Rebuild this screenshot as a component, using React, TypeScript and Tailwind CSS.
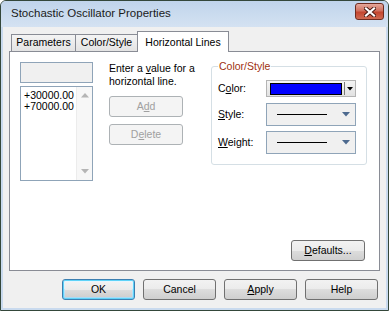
import React from "react";

const FONT = { fontFamily: '"Liberation Sans", Arial, sans-serif' };

const BTN =
  "flex items-center justify-center rounded-[3px] border border-[#707070] bg-[linear-gradient(#f2f2f2_0%,#ebebeb_50%,#dddddd_50%,#cfcfcf_100%)] text-[10.5px] text-black";

const DISABLED =
  "flex items-center justify-center rounded-[3px] border border-[#adb2b5] bg-[#f4f4f4] text-[10.5px] text-[#a0a0a0]";

function U({ children }: { children: React.ReactNode }) {
  return <span className="underline underline-offset-[1px]">{children}</span>;
}

function BlueArrow() {
  return (
    <svg width="8" height="5" viewBox="0 0 8 5">
      <polygon points="0,0 8,0 4,4.5" fill="#4d6a8f" />
    </svg>
  );
}

function LineCombo() {
  return (
    <div className="flex h-[23px] w-[90px] items-center border border-[#8fa4b8] bg-[#f0f0f0]">
      <div className="ml-[10px] h-px w-[50px] bg-black" />
      <div className="ml-auto mr-[5px] flex">
        <BlueArrow />
      </div>
    </div>
  );
}

function ScrollArrow({ up }: { up?: boolean }) {
  return (
    <svg width="8" height="5" viewBox="0 0 8 5">
      <polygon points={up ? "0,4.5 8,4.5 4,0" : "0,0 8,0 4,4.5"} fill="#b5b5b5" />
    </svg>
  );
}

export default function App() {
  return (
    <div style={FONT} className="h-[311px] w-[389px] overflow-hidden">
      <div className="flex h-full flex-col rounded-t-[6px] border border-[#34473a] bg-[#c9daee]">
        {/* title bar */}
        <div className="flex h-[26px] shrink-0 items-center bg-[linear-gradient(#c0d4eb,#d4e2f2)] pl-[10px] pr-[4px] rounded-t-[5px]">
          <span className="text-[11.5px] text-[#1a1a1a]">Stochastic Oscillator Properties</span>
          <div className="ml-auto mb-[5px] flex h-[17px] w-[29px] items-center justify-center rounded-[3px] border border-[#6e2b1f] bg-[linear-gradient(#e6a99c_0%,#d0705e_45%,#c4462f_55%,#cf6a52_100%)]">
            <svg width="12" height="10" viewBox="0 0 12 10">
              <path d="M2 1.5 L10 8.5 M10 1.5 L2 8.5" stroke="#4a1a12" strokeWidth="4" strokeLinecap="square" />
              <path d="M2 1.5 L10 8.5 M10 1.5 L2 8.5" stroke="#ffffff" strokeWidth="2.2" strokeLinecap="square" />
            </svg>
          </div>
        </div>

        {/* client area */}
        <div className="mx-[2px] mb-[2px] flex flex-1 flex-col bg-[#f0f0f0] px-[6px] pt-[4px]">
          {/* tabs */}
          <div className="relative z-10 flex h-[20px] items-end pl-[2px]">
            <div className="flex h-[17px] w-[65px] items-center justify-center border border-b-0 border-[#898c95] bg-[linear-gradient(#f4f4f4,#e3e3e3)] text-[10.5px]">
              Parameters
            </div>
            <div className="flex h-[17px] w-[62px] items-center justify-center border border-l-0 border-b-0 border-[#898c95] bg-[linear-gradient(#f4f4f4,#e3e3e3)] text-[10.5px]">
              Color/Style
            </div>
            <div className="-ml-px mb-[-1px] flex h-[21px] w-[92px] items-start justify-center border border-b-0 border-[#898c95] bg-white pt-[3px] text-[10.5px]">
              Horizontal Lines
            </div>
          </div>

          {/* panel */}
          <div className="flex h-[220px] flex-col border border-[#898c95] bg-white">
            <div className="flex items-start pl-[10px] pt-[10px]">
              <div className="flex w-[73px] flex-col">
                <div className="h-[21px] border border-[#8fa4b8] bg-[#f0f0f0]" />
                <div className="mt-[3px] flex h-[95px] border border-[#8fa4b8] bg-white">
                  <div className="flex-1 pl-[3px] pt-[3px] text-[10.5px] leading-[11px]">
                    <div>+30000.00</div>
                    <div>+70000.00</div>
                  </div>
                  <div className="flex w-[16px] flex-col items-center justify-between border-l border-[#ececec] bg-[#f7f7f7] py-[6px]">
                    <ScrollArrow up />
                    <ScrollArrow />
                  </div>
                </div>
              </div>

              <div className="ml-[16px] flex w-[102px] flex-col">
                <div className="text-[10.5px] leading-[13px]">
                  Enter a <U>v</U>alue for a
                  <br />
                  horizontal line.
                </div>
                <div className={DISABLED + " mt-[8px] h-[21px] w-[74px]"}>
                  A<U>d</U>d
                </div>
                <div className={DISABLED + " mt-[7px] h-[21px] w-[74px]"}>
                  D<U>e</U>lete
                </div>
              </div>

              <fieldset className="-mt-[2px] h-[105px] w-[156px] rounded-[3px] border border-[#d5dfe5] px-[6px] pt-[7px]">
                <legend className="px-[1px] text-[10.5px] leading-[13px] text-[#a0300f]">Color/Style</legend>
                <div className="flex h-[17px] items-center text-[10.5px]">
                  <span className="w-[48px]">
                    C<U>o</U>lor:
                  </span>
                  <div className="flex h-[17px] w-[90px] items-center border border-[#b4b4b4] bg-[linear-gradient(#f4f4f4,#e2e2e2)] pl-[3px]">
                    <div className="h-[12px] w-[72px] border border-black bg-[#0000ff]" />
                    <div className="ml-[2px] h-[13px] w-px bg-[#7a7a7a]" />
                    <div className="flex flex-1 justify-center">
                      <svg width="6" height="4" viewBox="0 0 6 4">
                        <polygon points="0,0 6,0 3,3.5" fill="#000" />
                      </svg>
                    </div>
                  </div>
                </div>
                <div className="mt-[6px] flex items-center text-[10.5px]">
                  <span className="w-[48px]">
                    <U>S</U>tyle:
                  </span>
                  <LineCombo />
                </div>
                <div className="mt-[5px] flex items-center text-[10.5px]">
                  <span className="w-[48px]">
                    <U>W</U>eight:
                  </span>
                  <LineCombo />
                </div>
              </fieldset>
            </div>

            <div className="mt-auto flex justify-end pb-[9px] pr-[14px]">
              <div className={BTN + " h-[21px] w-[74px]"}>
                <U>D</U>efaults...
              </div>
            </div>
          </div>

          {/* bottom buttons */}
          <div className="mt-[8px] flex justify-end gap-[8px] pr-[2px]">
            <div className="flex h-[21px] w-[73px] items-center justify-center rounded-[3px] border border-[#3c7fb1] bg-[linear-gradient(#eaf6fd_0%,#d9f0fc_50%,#bee6fd_50%,#a7d9f5_100%)] text-[10.5px] shadow-[inset_0_0_0_1px_#5fd3f8]">
              <span className="flex h-[15px] w-[67px] items-center justify-center bg-[linear-gradient(#f2f2f2_0%,#ebebeb_50%,#dddddd_50%,#cfcfcf_100%)]">OK</span>
            </div>
            <div className={BTN + " h-[21px] w-[73px]"}>Cancel</div>
            <div className={BTN + " h-[21px] w-[73px]"}>
              <U>A</U>pply
            </div>
            <div className={BTN + " h-[21px] w-[73px]"}>Help</div>
          </div>
        </div>
      </div>
    </div>
  );
}
